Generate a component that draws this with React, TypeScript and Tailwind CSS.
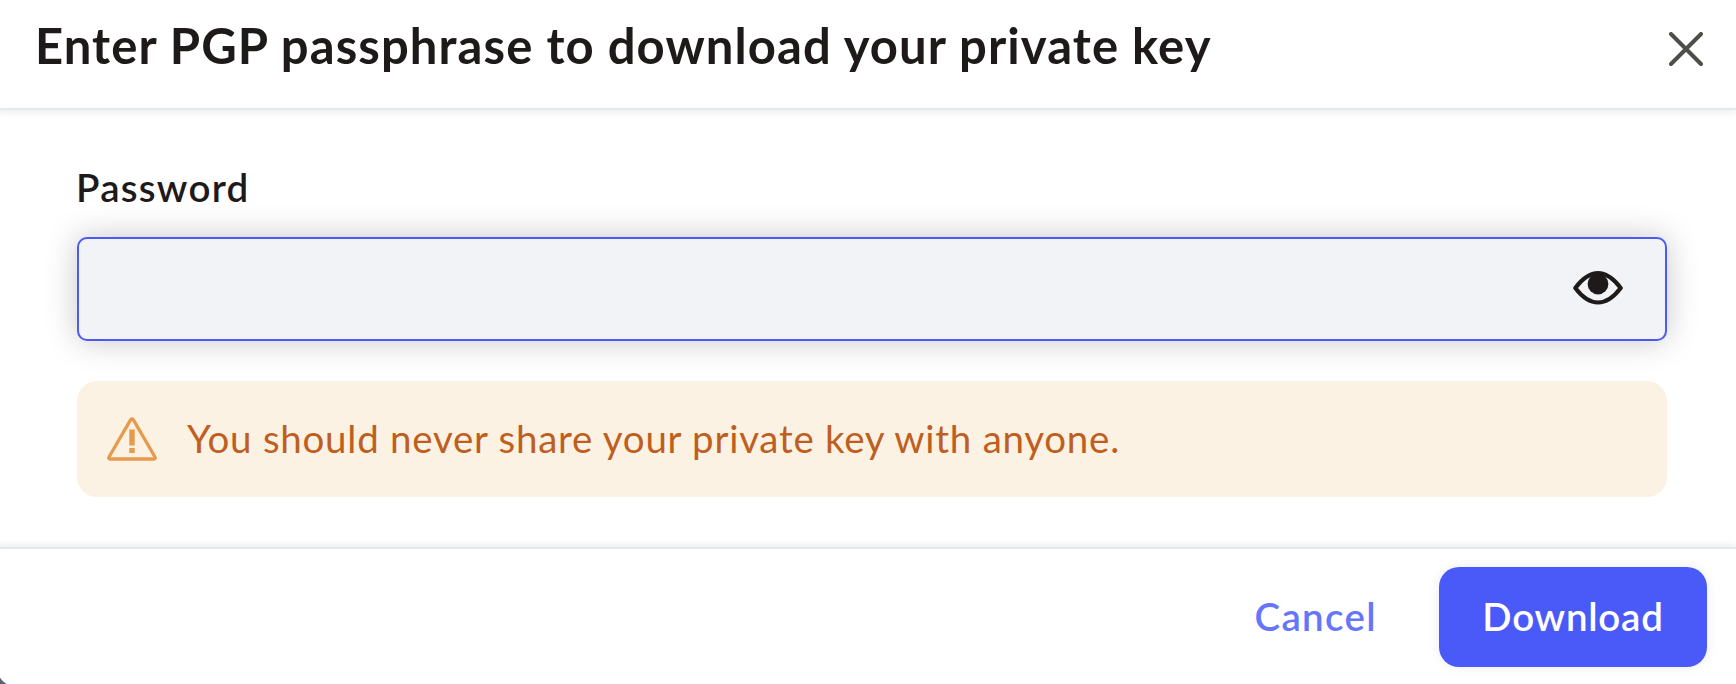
export default function App() {
  return (
    <div className="h-[684px] w-full overflow-hidden bg-[#5c6178] font-['Lato',sans-serif] text-[#1f1a1a]">
      <div className="-ml-[4px] flex h-[688px] flex-col overflow-hidden rounded-bl-[24px] bg-white">
        {/* Header */}
        <header className="relative flex h-[110px] shrink-0 items-start justify-between border-b-2 border-[#e6e9ec] bg-white pt-[17px] pr-[33px] pl-[39px] shadow-[0_2px_8px_rgba(0,0,0,0.08)]">
          <h1 className="text-[49px] leading-[56px] font-bold tracking-[1.08px] whitespace-nowrap">
            <span>Enter PGP passphrase to download your private key</span>
          </h1>
          <button aria-label="Close" className="mt-[15px]">
            <CloseIcon />
          </button>
        </header>

        {/* Body */}
        <main className="flex h-[437px] shrink-0 flex-col pt-[53px] pr-[69px] pl-[81px]">
          <label
            htmlFor="password"
            className="-ml-px h-[74px] text-[38.5px] leading-[48px] font-semibold tracking-[1.25px]"
          >
            <span>Password</span>
          </label>
          <div className="flex h-[104px] shrink-0 items-center rounded-[10px] border-2 border-[#4a59f7] bg-[#f1f3f7] pr-[42px] shadow-[0_0_32px_rgba(0,0,0,0.22)]">
            <input id="password" type="password" className="h-full min-w-0 flex-1 bg-transparent px-6 outline-none" />
            <button aria-label="Show password" className="mb-[3px]">
              <EyeIcon />
            </button>
          </div>

          <div className="relative mt-[40px] flex h-[116px] shrink-0 items-center rounded-[20px] bg-[#fcf2e3] pl-[30px] text-[#bf5f1f]">
            <WarningIcon />
            <p className="-mt-[2px] ml-[30px] text-[38.5px] leading-[48px] tracking-[0.74px] whitespace-nowrap">
              <span>You should never share your private key with anyone.</span>
            </p>
          </div>
        </main>

        {/* Footer */}
        <footer className="relative flex flex-1 items-start justify-end border-t-2 border-[#e6e9ec] bg-white pt-[18px] pr-[29px] text-[38.5px] font-semibold shadow-[0_-2px_8px_rgba(0,0,0,0.08)]">
          <button className="mr-[62px] h-[100px] tracking-[1.35px] text-[#6676fa]">
            <span>Cancel</span>
          </button>
          <button className="h-[100px] w-[268px] rounded-[20px] bg-[#4a5af8] tracking-[0.75px] text-white shadow-[0_0_12px_rgba(0,0,0,0.08)]">
            <span>Download</span>
          </button>
        </footer>
      </div>
    </div>
  );
}

function CloseIcon() {
  return (
    <svg width="34" height="34" viewBox="0 0 34 34" fill="none" className="block">
      <path d="M2 2l30 30M32 2L2 32" stroke="#4d4d49" strokeWidth="4" strokeLinecap="round" />
    </svg>
  );
}

function EyeIcon() {
  return (
    <svg width="50" height="34" viewBox="0 0 50 34" fill="none" className="block">
      <path
        d="M2.3 17C8 9.5 15.5 2.2 25 2.2S42 9.5 47.7 17C42 24.5 34.5 31.5 25 31.5S8 24.5 2.3 17Z"
        stroke="#1f1a1a"
        strokeWidth="4.2"
        strokeLinejoin="round"
      />
      <circle cx="25" cy="13" r="10.4" fill="#1f1a1a" />
    </svg>
  );
}

function WarningIcon() {
  return (
    <svg width="50" height="44" viewBox="0 0 50 44" fill="none" className="block">
      <path
        d="M23.7 2.7Q25 1 26.3 2.7L48 40Q48.7 42 47 42H3Q1.3 42 2 40Z"
        stroke="#e69a4b"
        strokeWidth="3.3"
        strokeLinejoin="round"
      />
      <path d="M22.3 12.5h5.4v16h-5.4zM22.3 31h5.4v5h-5.4z" fill="#e69a4b" />
    </svg>
  );
}
